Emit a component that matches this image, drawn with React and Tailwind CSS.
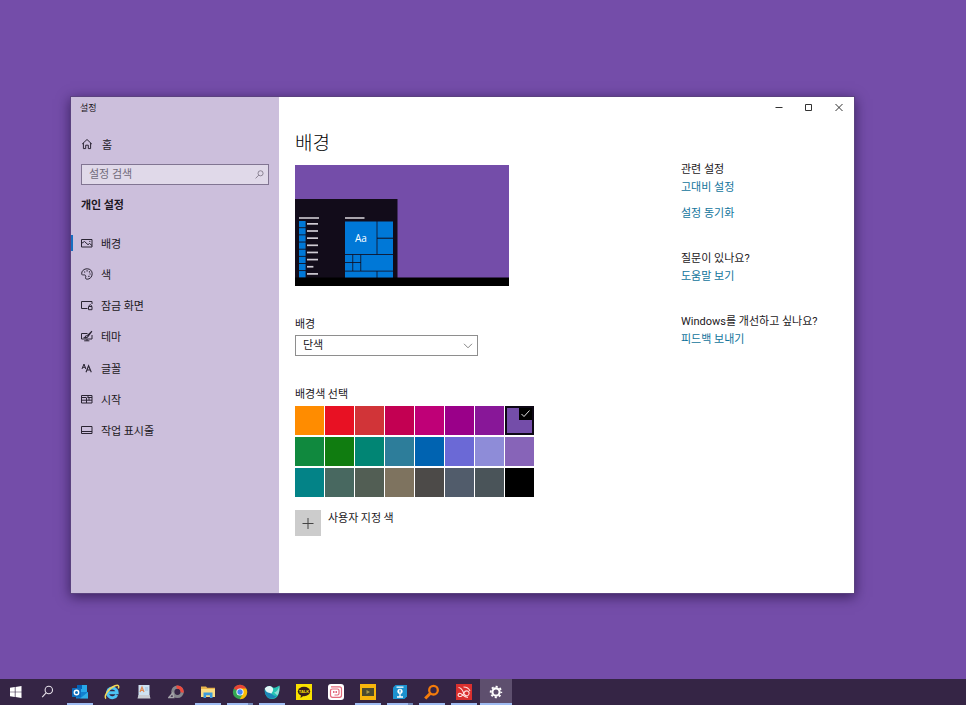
import React from "react";

const NAV = [
  { id: "background", label: "배경", icon: <PictureIcon /> },
  { id: "colors", label: "색", icon: <PaletteIcon /> },
  { id: "lock", label: "잠금 화면", icon: <LockScreenIcon /> },
  { id: "themes", label: "테마", icon: <ThemeIcon /> },
  { id: "fonts", label: "글꼴", icon: <FontIcon /> },
  { id: "start", label: "시작", icon: <StartIcon /> },
  { id: "taskbar", label: "작업 표시줄", icon: <TaskbarIcon /> },
];

const COLORS = [
  "#ff8c00", "#e81123", "#d13438", "#c30052", "#bf0077", "#9a0089", "#881798", "#744da9",
  "#10893e", "#107c10", "#018574", "#2d7d9a", "#0063b1", "#6b69d6", "#8e8cd8", "#8764b8",
  "#038387", "#486860", "#525e54", "#7e735f", "#4c4a48", "#515c6b", "#4a5459", "#000000",
];

function NavSvg({ children }) {
  return (
    <svg viewBox="0 0 12 12" className="size-3 shrink-0" fill="none" stroke="#2a2433" strokeWidth="1" aria-hidden="true">
      {children}
    </svg>
  );
}

function HomeIcon() {
  return (
    <NavSvg>
      <path d="M1.2 6 6 1.5 10.8 6M2.4 5v5.6h2.3V7.2h2.6v3.4h2.3V5" />
    </NavSvg>
  );
}
function PictureIcon() {
  return (
    <NavSvg>
      <path d="M.5 2.5h10.500v7.500H.5zM.8 6.200l2.700-1.700 3.500 3.200 1.500-1.200 2.500 2" />
      <path d="M8.200 4.400h1.200" />
    </NavSvg>
  );
}
function PaletteIcon() {
  return (
    <NavSvg>
      <path d="M4.3 7.3C3 6 1.5 8 .8 6.3.2 3 3 .8 6.2.8c3 0 5 2.1 5 4.9 0 3.3-2.5 5.6-5 5.5-2 0-1.9-1.4-1.4-2.3.2-.6 0-1.2-.5-1.6Z" />
      <path d="M3 4h1.200M5.500 2.800h1.200M7.900 3.800h1.200M8.500 6h1.200M7.300 8.300h1.200" strokeWidth="1.2" />
    </NavSvg>
  );
}
function LockScreenIcon() {
  return (
    <NavSvg>
      <path d="M6.500 9.500H.5v-7h10.500V5" />
      <path d="M7.500 7.500h3.500v3.200H7.500zM8.200 7.400V6.400q1.100-1.500 2.200 0v1" />
    </NavSvg>
  );
}
function ThemeIcon() {
  return (
    <NavSvg>
      <path d="M6.500 3.500h-6v5.500h10.500V5M3.200 10.800h5.200M6 9v1.800" />
      <path d="m11 1.200-4.800 4.400M10.800 1.400 7 6.400c-.8 1.6-2 1.600-3.600 1.400 1.200-.6.8-2 2.400-2.300" strokeWidth="1.1" />
    </NavSvg>
  );
}
function FontIcon() {
  return (
    <NavSvg>
      <path d="M1 7 3 2l1.800 5M1.600 5.300h2.800" />
      <path d="M5 10.200 7.600 3.800l2.700 6.400M5.900 8h3.500" strokeWidth="1.1" />
    </NavSvg>
  );
}
function StartIcon() {
  return (
    <NavSvg>
      <path d="M.5 2.500h10.500v7.500H.5zM.5 4.500h4.500M6.500 4.500H11M5.500 4.500v5.500M.5 7.200h5M8 4.500v2.700h3M5.500 7.200h2.700M7 2.500v2" />
    </NavSvg>
  );
}
function TaskbarIcon() {
  return (
    <NavSvg>
      <path d="M.5 2.500h10.500v7H.5zM.5 7.500h10.500" />
    </NavSvg>
  );
}

function SearchGlyph({ color, className }) {
  return (
    <svg viewBox="0 0 12 12" className={className} fill="none" stroke={color} strokeWidth="1" aria-hidden="true">
      <circle cx="7.4" cy="4.4" r="3.4" />
      <path d="M5 6.9.8 11.2" />
    </svg>
  );
}

function DesktopPreview() {
  const rows = [0, 1, 2, 3, 4, 5, 6, 7];
  return (
    <svg viewBox="0 0 214 121" className="mt-[10px] block h-[121px] w-[214px]" role="img" aria-label="배경 미리 보기">
      <rect width="214" height="121" fill="#744da9" />
      <rect y="34" width="102.5" height="79" fill="#120c1a" />
      <rect y="112.500" width="214" height="8.500" fill="#000" />
      <rect x="4" y="52" width="20" height="2" fill="#a8a4ac" />
      <rect x="50" y="52" width="19.5" height="2" fill="#a8a4ac" />
      {rows.map((i) => (
        <g key={i}>
          <rect x="4" y={56 + i * 7.15} width="6.6" height="6.3" fill="#0078d7" />
          <rect x="12" y={58 + i * 7.15} width={i === 6 ? 6.4 : 11} height="1.7" fill="#d0ccd4" />
        </g>
      ))}
      <g fill="#0078d7">
        <rect x="50" y="56.500" width="31.6" height="32.6" />
        <rect x="82.4" y="56.500" width="15.6" height="16.2" />
        <rect x="82.4" y="73.700" width="15.6" height="15.4" />
        <rect x="50" y="89.900" width="7.4" height="7.3" />
        <rect x="58.2" y="89.900" width="7.2" height="7.3" />
        <rect x="50" y="98" width="7.4" height="7.7" />
        <rect x="58.2" y="98" width="7.2" height="7.7" />
        <rect x="66.2" y="89.900" width="31.8" height="15.8" />
        <rect x="50" y="106.500" width="31.6" height="6" />
        <rect x="82.4" y="106.500" width="15.6" height="6" />
      </g>
      <text x="66" y="77" textAnchor="middle" fontSize="10" fill="#fff" fontFamily="'Open Sans', sans-serif">Aa</text>
    </svg>
  );
}

function AppSvg({ children }) {
  return (
    <svg viewBox="0 0 16 16" className="size-4" aria-hidden="true">
      {children}
    </svg>
  );
}

const TASKS = [
  {
    name: "시작",
    art: <path d="M2 3.800 6.800 3v4.700H2zM7.500 2.900l6-.9v5.700h-6zM2 8.300h4.800V13L2 12.300zM7.500 8.300h6V14l-6-.9z" fill="#fff" />,
  },
  {
    name: "검색",
    art: (
      <g fill="none" stroke="#e6e1ea" strokeWidth="1.1">
        <circle cx="8.800" cy="6" r="3.700" />
        <path d="m6.100 8.800-3.900 4.400" />
      </g>
    ),
  },
  {
    name: "Outlook",
    open: true,
    art: (
      <>
        <rect x="5" y="1" width="10" height="8" fill="#28a8ea" />
        <rect x="5" y="1" width="5" height="4" fill="#0364b8" />
        <path d="M4 8h12v6.5H4z" fill="#1280cf" />
        <path d="m16 8-8 6.5h8z" fill="#50d9ff" opacity=".5" />
        <rect x="0" y="4" width="9" height="9" rx=".6" fill="#0f6cbd" />
        <circle cx="4.5" cy="8.5" r="2.2" fill="none" stroke="#fff" strokeWidth="1.4" />
      </>
    ),
  },
  {
    name: "Internet Explorer",
    art: (
      <>
        <path d="M12.800 10.800A4.900 4.900 0 1 1 13.200 8.700H4.500" fill="none" stroke="#4cc3f5" strokeWidth="2.900" />
        <path d="M2 14.600C-.3 12.500 4 4.500 11 1.800c3.500-1.400 4.300.1 3.300 2.700" fill="none" stroke="#f6d655" strokeWidth="1.500" />
      </>
    ),
  },
  {
    name: "메모장",
    art: (
      <>
        <path d="M2.500 1h11v11h-11z" fill="#cfe2f1" />
        <path d="M2.500 11h11l1 3.500h-13z" fill="#c9cdd3" />
        <path d="m4 8 2-5 2 5M4.800 6.300h2.500" stroke="#e08a55" strokeWidth="1.200" fill="none" />
        <path d="M9 4h3M9 6h3" stroke="#8db9dc" strokeWidth=".8" />
      </>
    ),
  },
  {
    name: "캡처",
    art: (
      <g fill="none">
        <circle cx="9.500" cy="7.800" r="4.700" stroke="#85868d" strokeWidth="3.200" />
        <path d="M8.500 3.200a4.700 4.700 0 0 1 5.600 5.300" stroke="#ee493d" strokeWidth="3.200" />
        <path d="m.8 13.500 4-4.500 1 4.500z" stroke="#a5a5aa" strokeWidth="1.300" />
      </g>
    ),
  },
  {
    name: "파일 탐색기",
    open: true,
    art: (
      <>
        <path d="M1 2.500h5l1.200 1.300H15V13H1z" fill="#e9b44c" />
        <path d="M1 5h14v8H1z" fill="#fbdc83" />
        <path d="M3.500 8.500h9V14h-2.600v-2.700H6.100V14H3.500z" fill="#3e9bdc" />
      </>
    ),
  },
  {
    name: "Chrome",
    open: true,
    multi: true,
    art: (
      <>
        <circle cx="8" cy="8" r="7.200" fill="#34a853" />
        <path d="M8 8 1.800 4.400A7.200 7.200 0 0 1 14.200 4.400z" fill="#ea4335" />
        <path d="M8 8V4.400h6.200A7.200 7.200 0 0 1 7.800 15.200L11 9.700z" fill="#fbbc05" />
        <circle cx="8" cy="8" r="3.600" fill="#fff" />
        <circle cx="8" cy="8" r="2.700" fill="#4285f4" />
      </>
    ),
  },
  {
    name: "Whale",
    open: true,
    art: (
      <>
        <path d="M.8 4.500C4 1 7 1.500 9 3.500c2 1 4-1 6.500-2C16 9 14 15 8 15 3 15 0 10 .8 4.500Z" fill="#25c3b4" />
        <path d="M.8 4.500C4 1 7.500 1.500 9 4.500c.8 2-1 4-2 5.500C4 9.500 1.500 8 .8 4.500Z" fill="#e3f6f6" />
        <path d="M.8 6C3 9.500 7 8.500 8.500 10.500c1 1.500 3 1 4 1.500C8 17 1 14.500.8 6Z" fill="#1b86b8" />
        <path d="M10 8.500c3-.5 4.500-3.500 5.500-7 .2 4-.2 7.500-2 10z" fill="#e3f6f6" opacity=".55" />
      </>
    ),
  },
  {
    name: "KakaoTalk",
    art: (
      <>
        <rect width="16" height="16" fill="#fae100" />
        <ellipse cx="8" cy="7.500" rx="6.200" ry="4.700" fill="#371d1e" />
        <path d="m5 11-.5 3L8 11.500z" fill="#371d1e" />
        <text x="8" y="9" textAnchor="middle" fontSize="4" fontWeight="700" fill="#fae100" fontFamily="'Liberation Sans', sans-serif">TALK</text>
      </>
    ),
  },
  {
    name: "픽픽",
    art: (
      <>
        <rect width="16" height="16" rx="3" fill="#fff" />
        <path d="M3 2.800h8.500q2 0 2 2v6.500q0 2-2 2h-7q-2 0-2-2V7Q2.500 5 4.500 5H9.500q1.500 0 1.500 1.500v3q0 1.500-1.500 1.500H6.500" fill="none" stroke="#e56a7c" strokeWidth="1.200" />
        <path d="M5.800 7v2M8.200 7v2" stroke="#d94861" strokeWidth="1.200" />
      </>
    ),
  },
  {
    name: "팟플레이어",
    open: true,
    art: (
      <>
        <rect width="16" height="16" fill="#f7b50c" />
        <rect x="2" y="4" width="12" height="8" fill="#4b4a2e" />
        <path d="M6.500 6v4L10 8z" fill="#a8984b" />
      </>
    ),
  },
  {
    name: "반디집",
    open: true,
    multi: true,
    art: (
      <>
        <path d="M3.500 1H15v11.500L12.500 15H1V3.500z" fill="#1b91cf" />
        <path d="M4.500 3.200h7M8 10v3M5 13h6" stroke="#fff" strokeWidth="1.300" />
        <circle cx="8" cy="7.300" r="2.600" fill="#fff" />
        <path d="M8 5.800v2.800" stroke="#1b91cf" strokeWidth="1.200" />
      </>
    ),
  },
  {
    name: "Everything",
    open: true,
    art: (
      <g fill="none" stroke="#f47b0b">
        <circle cx="9.500" cy="6.200" r="4.300" strokeWidth="2.300" />
        <path d="m6.200 9.500-5 5" strokeWidth="3" />
      </g>
    ),
  },
  {
    name: "한글",
    open: true,
    art: (
      <>
        <rect width="16" height="16" fill="#d9302f" />
        <path d="M2.500 3.500C7 4 6.500 8.500 9 11c2 1.800 4.800 0 4-2.500-.8-2.300-4-2-5 .2C7 11 5 13.500 2.800 12.200c-1.500-1-.5-3.200 1.700-2.700 2 .5 3 3.500 7.500 4M7.500 3c3.500 0 5.500 1.500 6.500 4" fill="none" stroke="#ffe1df" strokeWidth="1.100" />
      </>
    ),
  },
  {
    name: "설정",
    open: true,
    active: true,
    art: (
      <g fill="none" stroke="#fff">
        <circle cx="8" cy="8" r="3.600" strokeWidth="2.100" />
        <circle cx="8" cy="8" r="5.300" strokeWidth="1.800" strokeDasharray="2.080 2.083" strokeDashoffset="1.040" />
      </g>
    ),
  },
];

function Sidebar() {
  return (
    <aside className="flex w-[208px] shrink-0 flex-col bg-[#ccbfdc]">
      <h1 className="flex h-[21px] items-center pl-[9px] text-[9px] leading-3 font-normal">설정</h1>
      <button type="button" className="mt-4 flex h-5 items-center gap-[9px] pl-[10px] text-left text-[11px]">
        <HomeIcon />
        <span>홈</span>
      </button>
      <div className="mx-[10px] mt-[10px] flex h-[21px] items-center border border-[#817592] bg-[#e0d9e9] pr-1">
        <input
          type="text"
          aria-label="설정 검색"
          placeholder="설정 검색"
          className="h-full min-w-0 flex-1 bg-transparent pl-[7px] font-[Roboto,'Noto_Sans_CJK_KR',sans-serif] text-[11px] leading-4 outline-none placeholder:text-[#716a79]"
        />
        <SearchGlyph color="#716a79" className="size-[9px]" />
      </div>
      <h2 className="mt-[10px] pl-[10px] text-[11px] leading-[18px] font-bold">개인 설정</h2>
      <nav className="mt-[14px] flex h-[219px] flex-col">
        {NAV.map((item, i) => (
          <a key={item.id} href={"#" + item.id} aria-current={i === 0 ? "page" : undefined} className="flex flex-1 items-center">
            <span className={i === 0 ? "h-4 w-[2px] bg-[#176fc1]" : "h-4 w-[2px]"} />
            <span className="flex items-center gap-2 pl-2 text-[11px] leading-4">
              {item.icon}
              <span>{item.label}</span>
            </span>
          </a>
        ))}
      </nav>
    </aside>
  );
}

function WindowControls() {
  return (
    <div className="flex h-[21px] justify-end">
      {[
        ["최소화", "M1.500 5.500h7"],
        ["최대화", "M1.500 2.500h6v6h-6z"],
        ["닫기", "m1.500 2 7 7m0-7-7 7"],
      ].map(([name, d]) => (
        <button key={name} type="button" aria-label={name} className="flex w-[30px] items-center justify-center">
          <svg viewBox="0 0 10 11" className="h-[11px] w-[10px]" fill="none" stroke="#333" strokeWidth="1" aria-hidden="true">
            <path d={d} />
          </svg>
        </button>
      ))}
    </div>
  );
}

function Content() {
  return (
    <section className="flex-1 pl-4">
      <h2 className="mt-[11px] text-[19px] leading-[26px] font-light text-black">배경</h2>
      <DesktopPreview />
      <label htmlFor="bg-kind" className="mt-[28px] block text-[11px] leading-[18px]">배경</label>
      <div className="relative mt-[3px] w-[183px]">
        <select id="bg-kind" defaultValue="solid" className="block h-[21px] w-full appearance-none border border-[#8e8e8e] bg-white pl-[7px] font-[Roboto,'Noto_Sans_CJK_KR',sans-serif] text-[11px] leading-4 outline-none">
          <option value="picture">사진</option>
          <option value="solid">단색</option>
          <option value="slideshow">슬라이드 쇼</option>
        </select>
        <svg viewBox="0 0 10 6" className="pointer-events-none absolute top-2 right-[5px] h-[6px] w-[10px]" fill="none" stroke="#777" strokeWidth="0.9" aria-hidden="true">
          <path d="m1 .8 4 4 4-4" />
        </svg>
      </div>
      <h3 className="mt-[28px] text-[11px] leading-[18px] font-normal">배경색 선택</h3>
      <div className="mt-[4px] grid w-[239px] grid-cols-8 gap-x-px gap-y-[2px]">
        {COLORS.map((color, i) => (
          <button
            key={color}
            type="button"
            aria-label={color}
            aria-pressed={i === 7}
            style={{ backgroundColor: color }}
            className={i === 7 ? "flex h-[29px] items-start justify-end border-2 border-[#0d0714]" : "h-[29px]"}
          >
            {i === 7 && (
              <svg viewBox="0 0 13 12" className="h-3 w-[13px] bg-black" fill="none" stroke="#fff" strokeWidth="0.9" aria-hidden="true">
                <path d="m2.500 6 2.500 2.500L10.500 2.500" />
              </svg>
            )}
          </button>
        ))}
      </div>
      <div className="mt-[13px] flex items-start gap-[7px]">
        <button id="custom-color" type="button" aria-labelledby="custom-color-label" className="flex size-[26px] items-center justify-center bg-[#ccc]">
          <svg viewBox="0 0 12 12" className="size-3" stroke="#444" strokeWidth="1" aria-hidden="true">
            <path d="M6 1v11M.5 6.500h11" />
          </svg>
        </button>
        <span id="custom-color-label" className="text-[11px] leading-[14px]">사용자 지정 색</span>
      </div>
    </section>
  );
}

function Related() {
  const link = "block text-[#12749c]";
  return (
    <aside className="w-[173px] shrink-0 pt-[43px] font-[Roboto,'Noto_Sans_CJK_KR',sans-serif] text-[11px] leading-[18px]">
      <h3 className="font-normal">관련 설정</h3>
      <a href="#contrast" className={link}>고대비 설정</a>
      <a href="#sync" className="mt-2 block text-[#12749c]">설정 동기화</a>
      <h3 className="mt-[27px] font-normal">질문이 있나요?</h3>
      <a href="#help" className={link}>도움말 보기</a>
      <h3 className="mt-[27px] font-normal whitespace-nowrap">Windows를 개선하고 싶나요?</h3>
      <a href="#feedback" className={link}>피드백 보내기</a>
    </aside>
  );
}

function Taskbar() {
  return (
    <footer className="flex h-[26px] shrink-0 bg-[#352545]">
      {TASKS.map((task) => (
        <button
          key={task.name}
          type="button"
          aria-label={task.name}
          className={task.active ? "flex w-8 flex-col items-center bg-[#5e4f6e] pt-[5px]" : "flex w-8 flex-col items-center pt-[5px]"}
        >
          <AppSvg>{task.art}</AppSvg>
          {task.open && (
            <span className={task.active ? "mt-[3px] flex h-[2px] w-full" : "mt-[3px] flex h-[2px] w-[26px]"}>
              <span className="flex-1 bg-[#9fbcf2]" />
              {task.multi && <span className="w-[5px] bg-[#7388b8]" />}
            </span>
          )}
        </button>
      ))}
    </footer>
  );
}

export default function App() {
  return (
    <div className="flex min-h-screen flex-col bg-[#744da9] font-['Noto_Sans_CJK_KR',sans-serif] text-[#1c1822]">
      <main className="flex flex-1 pt-24 pr-[111px] pb-[85px] pl-[70px]">
        <div className="flex flex-1 border border-[#5b4280] bg-white shadow-[0_3px_12px_rgba(20,5,45,0.6)]">
          <Sidebar />
          <div className="flex flex-1 flex-col">
            <WindowControls />
            <div className="flex flex-1">
              <Content />
              <Related />
            </div>
          </div>
        </div>
      </main>
      <Taskbar />
    </div>
  );
}
